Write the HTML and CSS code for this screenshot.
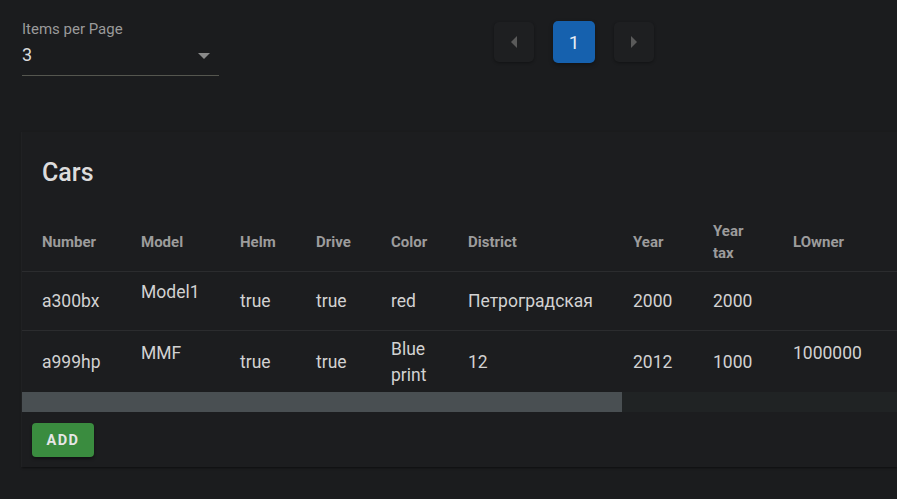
FILE: index.html
```html
<!DOCTYPE html>
<html lang="en">
<head>
<meta charset="utf-8">
<title>Cars</title>
<link rel="stylesheet" href="styles.css">
</head>
<body>
<div class="toolbar">
  <div class="select">
    <div class="select-label">Items per Page</div>
    <div class="select-value">
      <span>3</span>
      <svg class="caret" width="12" height="6" viewBox="0 0 12 6"><path d="M0 0h12L6 6z" fill="#8a8a8a"/></svg>
    </div>
  </div>
  <nav class="pager">
    <button class="pg nav"><svg width="6" height="12" viewBox="0 0 6 12"><path d="M6 0v12L0 6z" fill="#5a5a5a"/></svg></button>
    <button class="pg active">1</button>
    <button class="pg nav"><svg width="6" height="12" viewBox="0 0 6 12"><path d="M0 0v12l6-6z" fill="#5a5a5a"/></svg></button>
  </nav>
</div>

<section class="card">
  <h2 class="card-title">Cars</h2>
  <div class="table-wrap">
    <table class="cars">
      <thead>
        <tr>
          <th class="c-num">Number</th>
          <th class="c-model">Model</th>
          <th class="c-helm">Helm</th>
          <th class="c-drive">Drive</th>
          <th class="c-color">Color</th>
          <th class="c-district">District</th>
          <th class="c-year">Year</th>
          <th class="c-tax">Year<br>tax</th>
          <th class="c-owner">LOwner</th>
        </tr>
      </thead>
      <tbody>
        <tr class="row-first">
          <td>a300bx</td>
          <td><span class="raised">Model1</span></td>
          <td>true</td>
          <td>true</td>
          <td>red</td>
          <td>Петроградская</td>
          <td>2000</td>
          <td>2000</td>
          <td></td>
        </tr>
        <tr class="row-last">
          <td>a999hp</td>
          <td><span class="raised">MMF</span></td>
          <td>true</td>
          <td>true</td>
          <td>Blue<br>print</td>
          <td>12</td>
          <td>2012</td>
          <td>1000</td>
          <td><span class="raised">1000000</span></td>
        </tr>
      </tbody>
    </table>
  </div>
  <div class="scrollbar"><div class="thumb"></div></div>
  <div class="card-actions">
    <button class="btn-add">ADD</button>
  </div>
</section>
</body>
</html>
```

FILE: styles.css
```css
html { overflow: hidden; }
body {
  margin: 0;
  background: #1b1c1e;
  font-family: Roboto, "Noto Sans", "Liberation Sans", sans-serif;
  color: #d6d6d6;
  width: 897px;
  height: 499px;
}

.toolbar {
  display: flex;
  align-items: flex-start;
  padding: 20px 0 0 22px;
  height: 132px;
  box-sizing: border-box;
}

.select {
  width: 197px;
  border-bottom: 1px solid #55564f;
}
.select-label {
  font-size: 15px;
  line-height: 18px;
  color: #9a9a9a;
}
.select-value {
  display: flex;
  justify-content: space-between;
  align-items: center;
  font-size: 18px;
  line-height: 22px;
  color: #dcdcdc;
  padding: 6px 9px 9px 0;
}
.caret { margin-top: 1px; }

.pager {
  display: flex;
  align-items: center;
  gap: 19px;
  margin-left: 275px;
  height: 42px;
  margin-top: 1px;
}
.pg {
  border: none;
  padding: 0;
  display: flex;
  align-items: center;
  justify-content: center;
  border-radius: 5px;
  font-family: inherit;
}
.pg.nav {
  width: 40px;
  height: 40px;
  background: #1e1f21;
  box-shadow: 0 1px 3px rgba(0,0,0,0.35);
}
.pg.active {
  width: 42px;
  height: 42px;
  background: #1661ae;
  color: #e6ecf4;
  font-size: 19px;
  box-shadow: 0 2px 4px rgba(0,0,0,0.35);
}

.card {
  margin-left: 22px;
  height: 335px;
  background: #1c1d1f;
  box-shadow: -1px 0 0 #202123, 0 1px 2px rgba(0,0,0,0.5);
  box-sizing: border-box;
}
.card-title {
  margin: 0;
  padding: 21px 20px 20px;
  font-size: 25px;
  line-height: 40px;
  font-weight: 500;
  color: #dcdcdc;
}

.table-wrap {
  overflow: hidden;
  width: 875px;
}

.cars {
  border-collapse: collapse;
  table-layout: fixed;
  width: 1276px;
}
.cars th, .cars td {
  text-align: left;
  padding: 0 0 0 20px;
  vertical-align: middle;
  white-space: nowrap;
}
.cars th {
  font-size: 15px;
  font-weight: 700;
  color: #9c9c9c;
  line-height: 22px;
  height: 58px;
  border-bottom: 1px solid #2b2c2e;
}
.cars td {
  font-size: 17.5px;
  line-height: 26px;
  color: #d2d2d2;
}
.row-first td {
  height: 58px;
  border-bottom: 1px solid #2b2c2e;
}
.row-last td { height: 61px; }

.c-num { width: 79px; }
.c-model { width: 79px; }
.c-helm { width: 56px; }
.c-drive { width: 55px; }
.c-color { width: 57px; }
.c-district { width: 145px; }
.c-year { width: 60px; }
.c-tax { width: 60px; }

.raised {
  display: block;
  padding-bottom: 18px;
}

.scrollbar {
  height: 20px;
  background: #202324;
}
.thumb {
  width: 600px;
  height: 100%;
  background: #494f52;
}

.card-actions {
  padding: 11px 10px;
}
.btn-add {
  width: 62px;
  height: 34px;
  border: none;
  border-radius: 4px;
  background: #3a8c3f;
  color: #e6e6e6;
  font-family: inherit;
  font-size: 14.5px;
  font-weight: 700;
  letter-spacing: 1.4px;
  padding: 0;
  box-shadow: 0 2px 3px rgba(0,0,0,0.4);
}
```
